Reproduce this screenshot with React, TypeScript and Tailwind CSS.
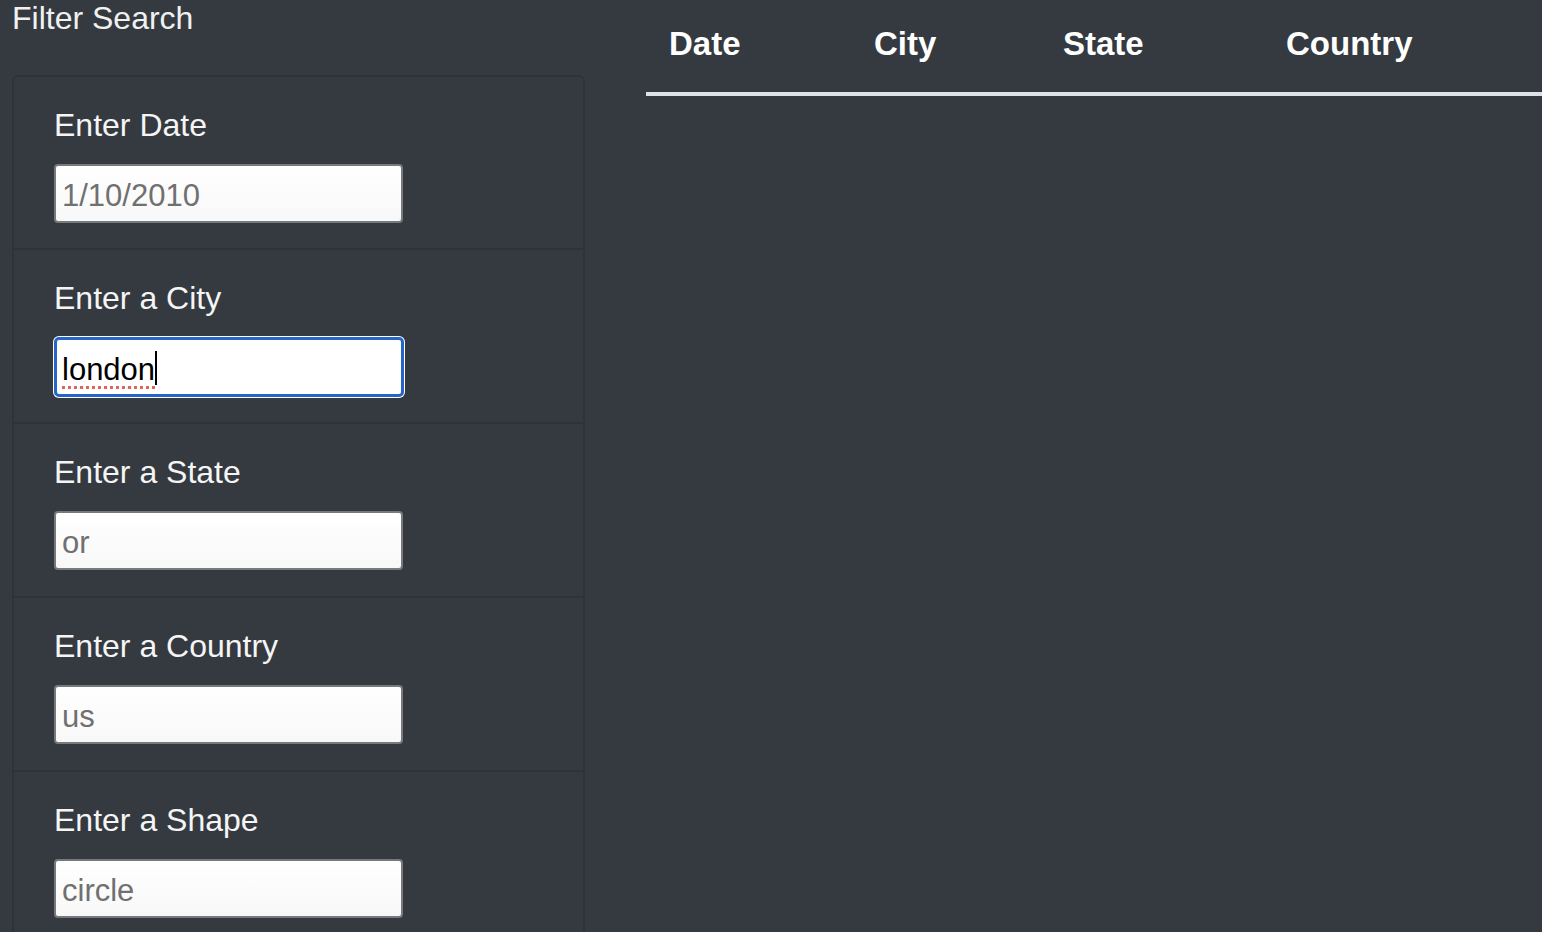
const fields = [
  { label: 'Enter Date', value: '1/10/2010' },
  { label: 'Enter a City', value: 'london', focused: true },
  { label: 'Enter a State', value: 'or' },
  { label: 'Enter a Country', value: 'us' },
  { label: 'Enter a Shape', value: 'circle' },
]

const columns = [
  { name: 'Date', width: 'w-[205px]' },
  { name: 'City', width: 'w-[189px]' },
  { name: 'State', width: 'w-[223px]' },
  { name: 'Country', width: 'w-[200px]' },
]

function FilterInput({ value, focused }: { value: string; focused?: boolean }) {
  if (focused) {
    // focused field with caret and spellcheck squiggle
    return (
      <div className="w-[352px] h-[62px] -ml-px -mt-px rounded-[6px] bg-white p-px">
        <div className="w-full h-full rounded-[5px] border-[3px] border-[#2566c8] bg-white flex items-center pl-[5px] pt-[4px]">
          <span className="text-[31px] leading-none text-black underline decoration-dotted decoration-[#e0645a] decoration-[3px] underline-offset-[6px]">
            {value}
          </span>
          <span className="w-[2px] h-[34px] bg-black -mt-[2px]" />
        </div>
      </div>
    )
  }
  return (
    <div className="w-[349px] h-[59px] rounded-[4px] border-2 border-[#777a7d] bg-gradient-to-b from-white to-[#f8f8f8] flex items-center pl-[6px] pt-[3px]">
      <span className="text-[31px] leading-none text-[#707070]">{value}</span>
    </div>
  )
}

export default function App() {
  return (
    <div
      className="w-[1542px] h-[932px] overflow-hidden bg-[#343a40] text-white flex"
      style={{ fontFamily: '"Liberation Sans", Arial, sans-serif' }}
    >
      <div className="w-[585px] shrink-0 pl-[12px] flex flex-col">
        <div className="h-[75px] shrink-0 text-[32px] leading-[37px] text-[#f1f1f1]">Filter Search</div>
        <div className="w-[573px] shrink-0 border-2 border-[#2e3338] rounded-[6px] flex flex-col">
          {fields.map((f, i) => (
            <div
              key={f.label}
              className={`shrink-0 pl-[40px] pt-[24px] flex flex-col ${i === 0 ? 'h-[173px]' : 'h-[174px]'} ${i < fields.length - 1 ? 'border-b-2 border-[#2e3338]' : ''}`}
            >
              <label className="text-[32px] leading-[48px] text-[#f5f5f5]">{f.label}</label>
              <div className="mt-[15px]">
                <FilterInput value={f.value} focused={f.focused} />
              </div>
            </div>
          ))}
        </div>
      </div>
      <div className="flex-1 pl-[61px]">
        <div className="flex h-[96px] border-b-[4px] border-[#dee2e6]">
          {columns.map(c => (
            <div key={c.name} className={`${c.width} pl-[23px] pt-[24px] text-[33px] leading-[40px] font-bold text-white`}>
              {c.name}
            </div>
          ))}
        </div>
      </div>
    </div>
  )
}
